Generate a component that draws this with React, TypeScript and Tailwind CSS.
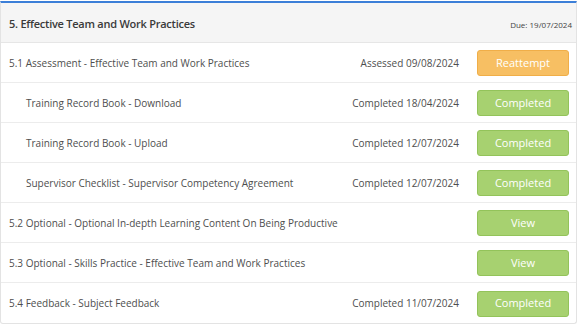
import React from "react";

type Row = { label: string; indent?: boolean; status?: string; btn: string; kind: "orange" | "green" };

const rows: Row[] = [
  { label: "5.1 Assessment - Effective Team and Work Practices", status: "Assessed 09/08/2024", btn: "Reattempt", kind: "orange" },
  { label: "Training Record Book - Download", indent: true, status: "Completed 18/04/2024", btn: "Completed", kind: "green" },
  { label: "Training Record Book - Upload", indent: true, status: "Completed 12/07/2024", btn: "Completed", kind: "green" },
  { label: "Supervisor Checklist - Supervisor Competency Agreement", indent: true, status: "Completed 12/07/2024", btn: "Completed", kind: "green" },
  { label: "5.2 Optional - Optional In-depth Learning Content On Being Productive", btn: "View", kind: "green" },
  { label: "5.3 Optional - Skills Practice - Effective Team and Work Practices", btn: "View", kind: "green" },
  { label: "5.4 Feedback - Subject Feedback", status: "Completed 11/07/2024", btn: "Completed", kind: "green" },
];

export default function App() {
  return (
    <div className="w-[581px] h-[324px] bg-white pt-[1px]" style={{ fontFamily: '"Open Sans", "Liberation Sans", sans-serif' }}>
      <div className="w-[577px] border-t-[2px] border-t-[#3c7fd8] border-x border-b border-[#e3e3e3] rounded-b-[3px]">
        <div className="h-[40px] bg-[#f5f5f5] border-b border-[#e6e6e6] flex items-center justify-between pl-[8px] pr-[4px] pt-[4px]">
          <span className="text-[11px] font-semibold tracking-[-0.25px] text-[#3a3a3a]">5. Effective Team and Work Practices</span>
          <span className="text-[8px] text-[#444]">Due: 19/07/2024</span>
        </div>
        {rows.map((r, i) => (
          <div
            key={i}
            className={`h-[40px] flex items-center pr-[7px] pt-[1px] ${i < rows.length - 1 ? "border-b border-[#ececec]" : ""} ${r.indent ? "pl-[25px]" : "pl-[8px]"}`}
          >
            <span className="flex-1 text-[10px] text-[#4e4e4e] whitespace-nowrap">{r.label}</span>
            {r.status && <span className="text-[10px] text-[#4e4e4e] mr-[18px] whitespace-nowrap">{r.status}</span>}
            <button
              className={`w-[92px] h-[26px] rounded-[3px] border text-[11px] text-white ${
                r.kind === "orange" ? "bg-[#f7bf63] border-[#f0ae48]" : "bg-[#a7d170] border-[#93c35a]"
              }`}
            >
              {r.btn}
            </button>
          </div>
        ))}
      </div>
    </div>
  );
}
